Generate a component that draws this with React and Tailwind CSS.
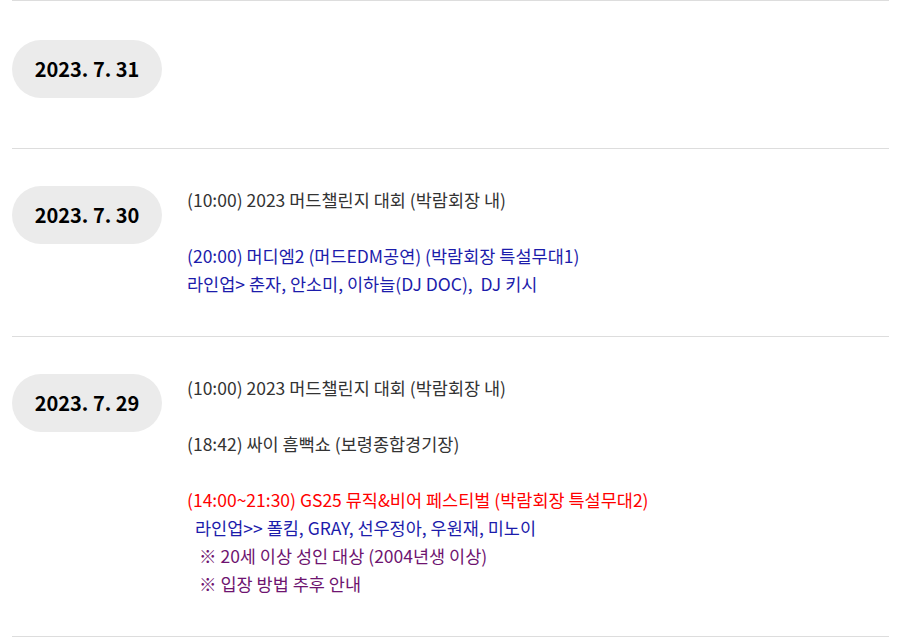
import React from "react";

const schedule = [
  { date: "2023. 7. 31", lines: [] },
  {
    date: "2023. 7. 30",
    lines: [
      { text: "(10:00) 2023 머드챌린지 대회 (박람회장 내)", color: "text-[#333333]" },
      { text: "" },
      { text: "(20:00) 머디엠2 (머드EDM공연) (박람회장 특설무대1)", color: "text-[#1c1cab]" },
      { text: "라인업> 춘자, 안소미, 이하늘(DJ DOC),  DJ 키시", color: "text-[#1c1cab]" },
    ],
  },
  {
    date: "2023. 7. 29",
    lines: [
      { text: "(10:00) 2023 머드챌린지 대회 (박람회장 내)", color: "text-[#333333]" },
      { text: "" },
      { text: "(18:42) 싸이 흠뻑쇼 (보령종합경기장)", color: "text-[#333333]" },
      { text: "" },
      { text: "(14:00~21:30) GS25 뮤직&비어 페스티벌 (박람회장 특설무대2)", color: "text-[#ff0000]" },
      { text: "라인업>> 폴킴, GRAY, 선우정아, 우원재, 미노이", color: "text-[#1c1cab]", indent: "pl-[8px]" },
      { text: "※ 20세 이상 성인 대상 (2004년생 이상)", color: "text-[#6e1470]", indent: "pl-[12px]" },
      { text: "※ 입장 방법 추후 안내", color: "text-[#6e1470]", indent: "pl-[12px]" },
    ],
  },
];

const App = () => {
  return (
    <div
      className="bg-white w-[902px] h-[637px] pl-[12px] pr-[13px]"
      style={{ fontFamily: '"Noto Sans CJK KR", "Noto Sans", sans-serif' }}
    >
      <div className="border-t border-[#dddddd]">
        {schedule.map((day, i) => (
          <div
            key={day.date}
            className={`flex border-b border-[#dddddd] ${
              i === 0 ? "pt-[39px] pb-[50px]" : "pt-[37px] pb-[38px]"
            }`}
          >
            <div className="w-[150px] h-[58px] shrink-0 rounded-full bg-[#ebebeb] flex items-center justify-center text-[20px] font-bold text-black">
              {day.date}
            </div>
            <div className="ml-[25px] text-[17.5px] leading-[28px] whitespace-pre">
              {day.lines.map((line, j) => (
                <div key={j} className={`h-[28px] ${line.color || ""} ${line.indent || ""}`}>
                  {line.text}
                </div>
              ))}
            </div>
          </div>
        ))}
      </div>
    </div>
  );
};

export default App;
